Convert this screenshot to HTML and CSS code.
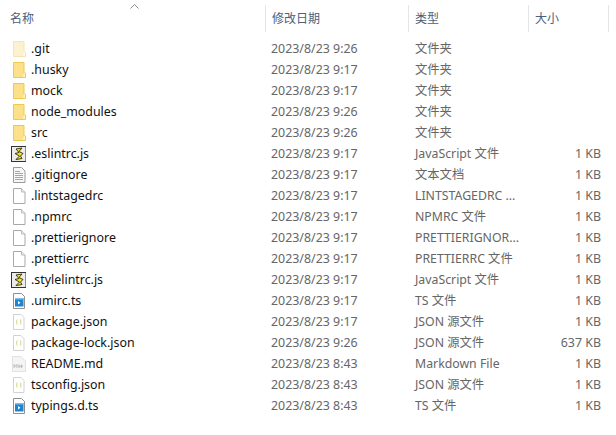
FILE: index.html
```html
<!DOCTYPE html>
<html lang="zh-CN">
<head>
<meta charset="utf-8">
<title>文件列表</title>
<link rel="stylesheet" href="styles.css">
</head>
<body>
<svg class="defs" width="0" height="0" aria-hidden="true">
  <symbol id="folder" viewBox="0 0 16 16">
    <path d="M3.500 .5H14V11H15.500V15.500H3.500Z" fill="#fde08a" stroke="#eec94f"/>
    <path d="M14 11H15V15H13Z" fill="#fff3c4"/>
  </symbol>
  <symbol id="folder-hidden" viewBox="0 0 16 16">
    <path d="M3.500 .5H14V11H15.500V15.500H3.500Z" fill="#fdf2cf" stroke="#f6e5b0"/>
    <path d="M14 11H15V15H13Z" fill="#fffaf0"/>
  </symbol>
  <symbol id="blank" viewBox="0 0 16 16">
    <path d="M3.500 .5H11.500L15 4V15.500H3.500Z" fill="#fff" stroke="#a9a9a9"/>
    <path d="M11.500 .5V4H15" fill="#f0f0f0" stroke="#bbb"/>
  </symbol>
  <symbol id="text" viewBox="0 0 16 16">
    <path d="M3.500 .5H11.500L15 4V15.500H3.500Z" fill="#f7f7f7" stroke="#9a9a9a"/>
    <path d="M5 4.500H10M5 6.500H13M5 8.500H13M5 10.500H13M5 12.500H13" stroke="#a5a5a5"/>
  </symbol>
  <symbol id="script" viewBox="0 0 16 16">
    <rect x="1.500" y=".5" width="14.500" height="15" fill="#ececec" stroke="#333"/>
    <path d="M12 2 6 3 9 6.500 5 7.500 9.500 10 6 13.500 12 12.500 10.500 10 13 7.500 9 5.500Z" fill="#f3e32b" stroke="#2e2e08" stroke-width=".9"/>
  </symbol>
  <symbol id="ts" viewBox="0 0 16 16">
    <path d="M3.500 .5H11.500L14.500 3.500V15.500H3.500Z" fill="#fff" stroke="#8e8e8e"/>
    <rect x="5" y="5" width="8.500" height="8.500" fill="#1d84d0"/>
    <rect x="5" y="5" width="8.500" height="1.500" fill="#7cc0ee"/>
    <path d="M8 8 10.500 9.750 8 11.500Z" fill="#fff"/>
  </symbol>
  <symbol id="json" viewBox="0 0 16 16">
    <path d="M3.500 .5H11L14 3.500V15.500H3.500Z" fill="#fff" stroke="#d2d2d2"/>
    <path d="M7.500 5.500Q6.300 5.500 6.700 8 6.300 10.500 7.500 10.500M10 5.500Q11.200 5.500 10.800 8 11.200 10.500 10 10.500" fill="none" stroke="#d6d58a"/>
  </symbol>
  <symbol id="md" viewBox="0 0 16 16">
    <path d="M2.500 .5H11L15.500 5V15.500H2.500Z" fill="#f4f4f4" stroke="#e2e2e2"/>
    <path d="M4 12V8.500L5.500 10.500 7 8.500V12M9 8.500V12M11.500 8.500V12M8.500 10.200H13" fill="none" stroke="#b4b4b4" stroke-width=".9"/>
  </symbol>
</svg>

<div class="list">
  <div class="head">
    <span class="sort-arrow"><svg width="9" height="5" viewBox="0 0 9 5"><path d="M.5 4.500 4.500 .5 8.500 4.500" fill="none" stroke="#8b8b8b"/></svg></span>
    <div class="col col-name">名称</div>
    <div class="col col-date">修改日期</div>
    <div class="col col-type">类型</div>
    <div class="col col-size">大小</div>
    <div class="col-end"></div>
  </div>

  <div class="rows">
    <div class="row"><div class="name"><svg class="ico"><use href="#folder-hidden"/></svg>.git</div><div class="date">2023/8/23 9:26</div><div class="type">文件夹</div><div class="size"></div></div>
    <div class="row"><div class="name"><svg class="ico"><use href="#folder"/></svg>.husky</div><div class="date">2023/8/23 9:17</div><div class="type">文件夹</div><div class="size"></div></div>
    <div class="row"><div class="name"><svg class="ico"><use href="#folder"/></svg>mock</div><div class="date">2023/8/23 9:17</div><div class="type">文件夹</div><div class="size"></div></div>
    <div class="row"><div class="name"><svg class="ico"><use href="#folder"/></svg>node_modules</div><div class="date">2023/8/23 9:26</div><div class="type">文件夹</div><div class="size"></div></div>
    <div class="row"><div class="name"><svg class="ico"><use href="#folder"/></svg>src</div><div class="date">2023/8/23 9:26</div><div class="type">文件夹</div><div class="size"></div></div>
    <div class="row"><div class="name"><svg class="ico"><use href="#script"/></svg>.eslintrc.js</div><div class="date">2023/8/23 9:17</div><div class="type">JavaScript 文件</div><div class="size">1 KB</div></div>
    <div class="row"><div class="name"><svg class="ico"><use href="#text"/></svg>.gitignore</div><div class="date">2023/8/23 9:17</div><div class="type">文本文档</div><div class="size">1 KB</div></div>
    <div class="row"><div class="name"><svg class="ico"><use href="#blank"/></svg>.lintstagedrc</div><div class="date">2023/8/23 9:17</div><div class="type">LINTSTAGEDRC ...</div><div class="size">1 KB</div></div>
    <div class="row"><div class="name"><svg class="ico"><use href="#blank"/></svg>.npmrc</div><div class="date">2023/8/23 9:17</div><div class="type">NPMRC 文件</div><div class="size">1 KB</div></div>
    <div class="row"><div class="name"><svg class="ico"><use href="#blank"/></svg>.prettierignore</div><div class="date">2023/8/23 9:17</div><div class="type">PRETTIERIGNOR...</div><div class="size">1 KB</div></div>
    <div class="row"><div class="name"><svg class="ico"><use href="#blank"/></svg>.prettierrc</div><div class="date">2023/8/23 9:17</div><div class="type">PRETTIERRC 文件</div><div class="size">1 KB</div></div>
    <div class="row"><div class="name"><svg class="ico"><use href="#script"/></svg>.stylelintrc.js</div><div class="date">2023/8/23 9:17</div><div class="type">JavaScript 文件</div><div class="size">1 KB</div></div>
    <div class="row"><div class="name"><svg class="ico"><use href="#ts"/></svg>.umirc.ts</div><div class="date">2023/8/23 9:17</div><div class="type">TS 文件</div><div class="size">1 KB</div></div>
    <div class="row"><div class="name"><svg class="ico"><use href="#json"/></svg>package.json</div><div class="date">2023/8/23 9:17</div><div class="type">JSON 源文件</div><div class="size">1 KB</div></div>
    <div class="row"><div class="name"><svg class="ico"><use href="#json"/></svg>package-lock.json</div><div class="date">2023/8/23 9:26</div><div class="type">JSON 源文件</div><div class="size">637 KB</div></div>
    <div class="row"><div class="name"><svg class="ico"><use href="#md"/></svg>README.md</div><div class="date">2023/8/23 8:43</div><div class="type">Markdown File</div><div class="size">1 KB</div></div>
    <div class="row"><div class="name"><svg class="ico"><use href="#json"/></svg>tsconfig.json</div><div class="date">2023/8/23 8:43</div><div class="type">JSON 源文件</div><div class="size">1 KB</div></div>
    <div class="row"><div class="name"><svg class="ico"><use href="#ts"/></svg>typings.d.ts</div><div class="date">2023/8/23 8:43</div><div class="type">TS 文件</div><div class="size">1 KB</div></div>
  </div>
</div>
</body>
</html>
```

FILE: styles.css
```css
* { box-sizing: border-box; }
html, body { margin: 0; background: #fff; }
body {
  width: 616px;
  height: 435px;
  overflow: hidden;
  font-family: "Noto Sans", "Noto Sans CJK SC", sans-serif;
  font-size: 12px;
  color: #1c1c1c;
}
.defs { position: absolute; }
.list { padding-top: 5px; }
.head {
  position: relative;
  display: grid;
  grid-template-columns: 265px 143px 120px 80px 8px;
  height: 27px;
  color: #4c607a;
}
.col {
  display: flex;
  align-items: center;
  padding-bottom: 2px;
  padding-left: 6px;
  border-left: 1px solid #e3e5e7;
  white-space: nowrap;
}
.col-name { border-left: 0; padding-left: 10px; }
.col-end { border-left: 1px solid #e3e5e7; }
.sort-arrow {
  position: absolute;
  left: 130px;
  top: -1px;
  display: flex;
}
.rows { padding-top: 6px; }
.row {
  display: grid;
  grid-template-columns: 271px 144px 130px 56px;
  height: 21px;
  align-items: center;
  line-height: 21px;
  white-space: nowrap;
}
.name {
  display: flex;
  align-items: center;
  gap: 5px;
  padding-left: 10px;
  font-size: 12.4px;
  color: #111;
}
.ico { width: 16px; height: 16px; flex: none; }
.date, .type, .size { color: #666; font-size: 12.4px; }
.type { font-size: 12.3px; }
.size { text-align: right; }
```
